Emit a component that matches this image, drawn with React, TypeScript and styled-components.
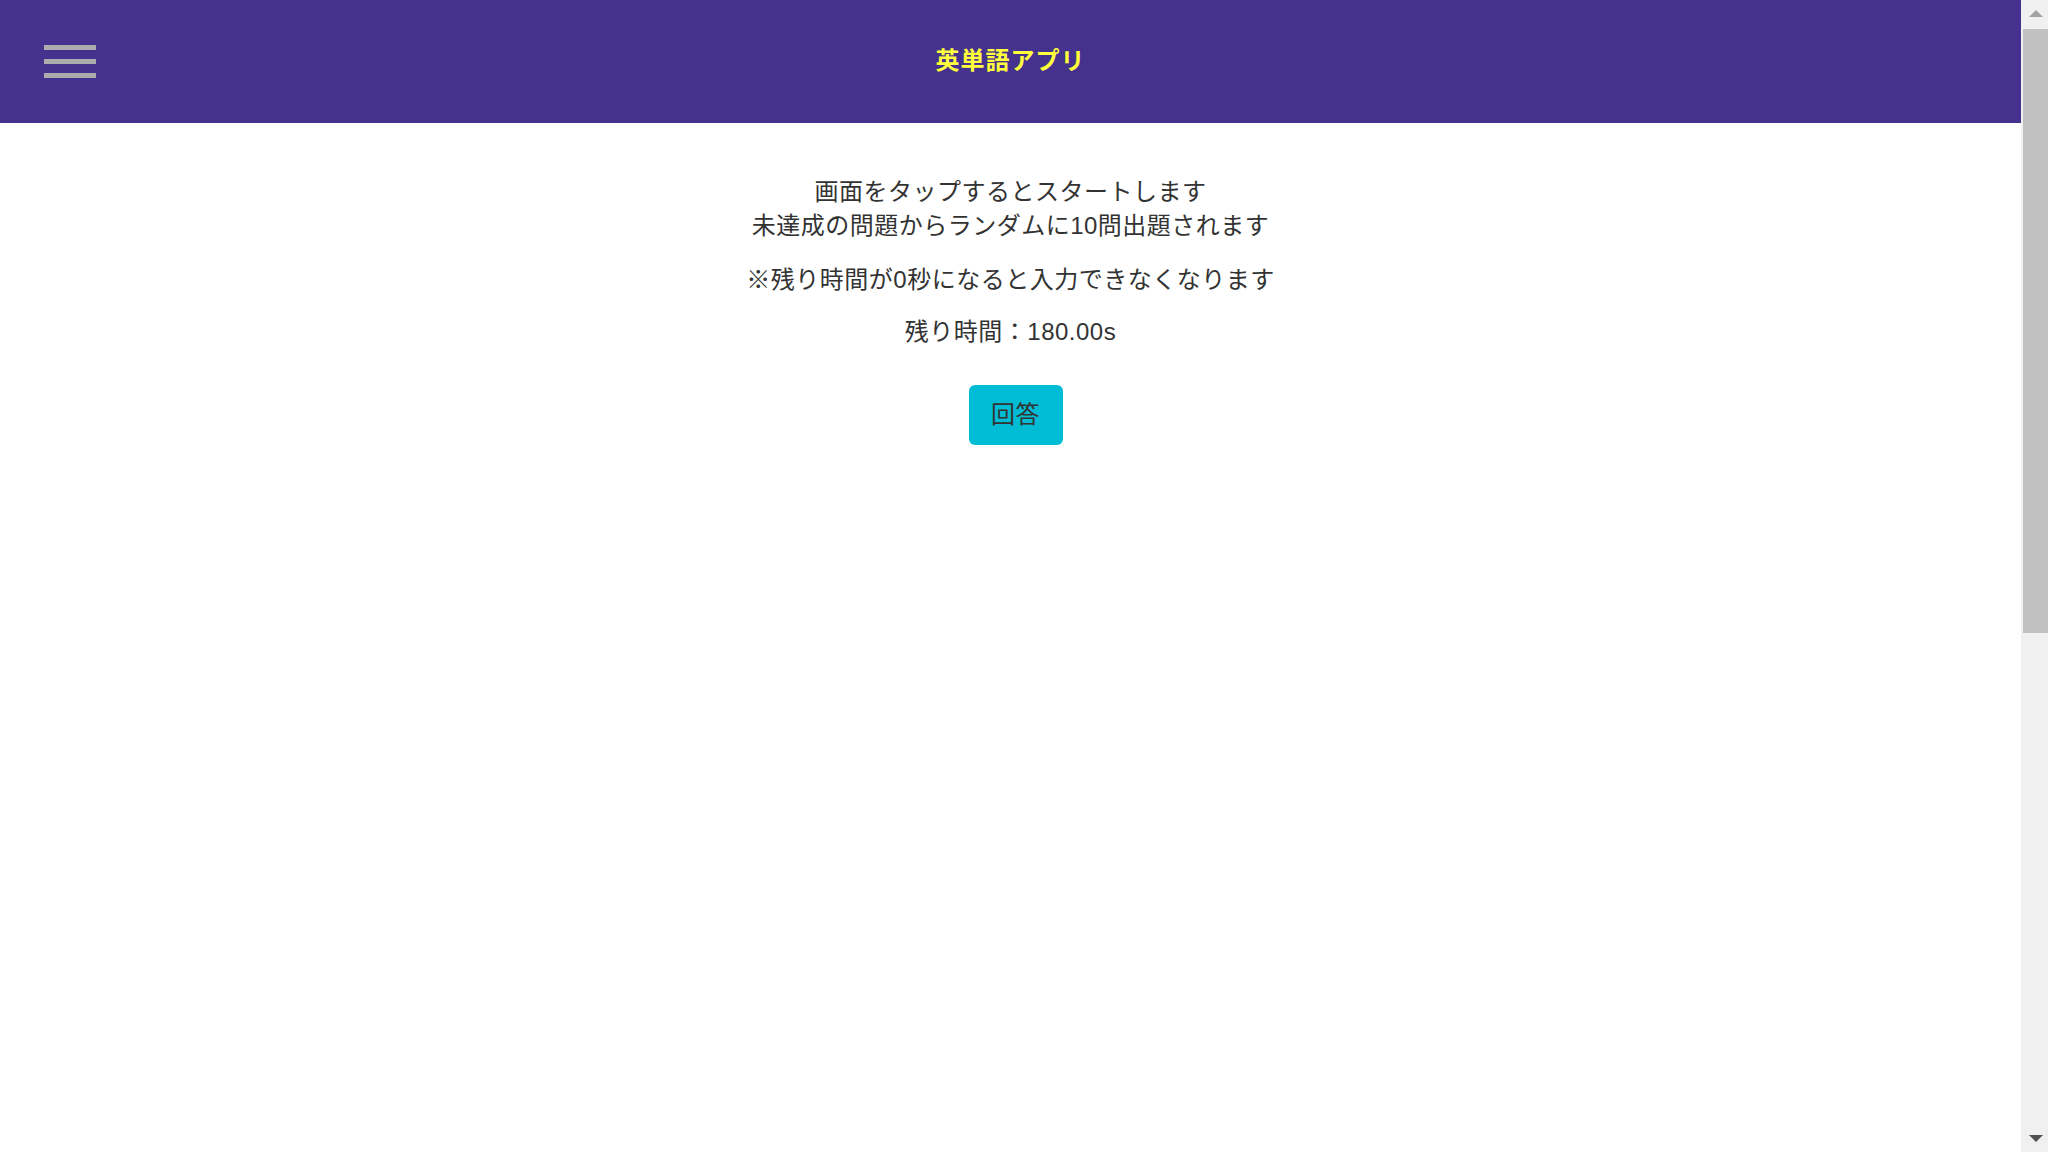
import React from "react";
import styled, { createGlobalStyle } from "styled-components";

const GlobalStyle = createGlobalStyle`
  html, body {
    margin: 0;
    padding: 0;
    height: 100%;
    overflow: hidden;
    background: #ffffff;
  }
  body {
    font-family: "Liberation Sans", "Noto Sans CJK JP", sans-serif;
    color: #333333;
  }
  #root {
    height: 100%;
  }
`;

const Shell = styled.div`
  display: flex;
  flex-direction: row;
  height: 100vh;
  width: 100vw;
`;

const Page = styled.div`
  flex: 1;
  display: flex;
  flex-direction: column;
  min-width: 0;
  background: #ffffff;
`;

const Header = styled.header`
  height: 123px;
  background: #45318e;
  display: grid;
  grid-template-columns: 1fr auto 1fr;
  align-items: center;
  flex-shrink: 0;
`;

const MenuButton = styled.button`
  justify-self: start;
  margin-left: 44px;
  margin-top: -1px;
  width: 52px;
  height: 33px;
  padding: 0;
  border: none;
  background: transparent;
  display: flex;
  flex-direction: column;
  justify-content: space-between;
  cursor: pointer;
`;

const MenuBar = styled.span`
  display: block;
  width: 52px;
  height: 5px;
  background: #acacac;
`;

const Title = styled.h1`
  margin: -5px 0 0;
  font-family: "Noto Sans CJK JP", sans-serif;
  font-size: 24px;
  font-weight: 700;
  color: #ffff3c;
  line-height: 1;
  letter-spacing: 1px;
`;

const Main = styled.main`
  display: flex;
  flex-direction: column;
  align-items: center;
  padding-top: 52px;
`;

const Message = styled.p<{ $gap: number }>`
  margin: ${(p) => p.$gap}px 0 0;
  font-size: 24px;
  line-height: 34px;
  text-align: center;
  color: #333333;
  letter-spacing: 0.5px;
`;

const AnswerButton = styled.button`
  margin-top: 36px;
  margin-left: 10px;
  width: 94px;
  height: 60px;
  border: none;
  border-radius: 6px;
  background: #00bcd4;
  color: #333333;
  font-family: "Noto Sans CJK JP", sans-serif;
  font-size: 24px;
  line-height: 1;
  letter-spacing: 0.5px;
  padding: 0 0 5px;
  cursor: pointer;
`;

const ScrollRail = styled.div`
  width: 27px;
  flex-shrink: 0;
  background: #f0f0f0;
  display: flex;
  flex-direction: column;
`;

const ScrollArrow = styled.div`
  height: 27px;
  display: flex;
  align-items: center;
  justify-content: center;
  padding-left: 2px;
`;

const ScrollTrack = styled.div`
  flex: 1;
  padding: 2px 0 0 2px;
`;

const ScrollThumb = styled.div`
  height: 604px;
  background: #c1c1c1;
`;

export default function App() {
  return (
    <>
      <GlobalStyle />
      <Shell>
        <Page>
          <Header>
            <MenuButton aria-label="menu">
              <MenuBar />
              <MenuBar />
              <MenuBar />
            </MenuButton>
            <Title>英単語アプリ</Title>
            <div />
          </Header>
          <Main>
            <Message $gap={0}>
              画面をタップするとスタートします
              <br />
              未達成の問題からランダムに10問出題されます
            </Message>
            <Message $gap={20}>※残り時間が0秒になると入力できなくなります</Message>
            <Message $gap={18}>残り時間：180.00s</Message>
            <AnswerButton>回答</AnswerButton>
          </Main>
        </Page>
        <ScrollRail>
          <ScrollArrow>
            <svg width="14" height="7" viewBox="0 0 14 7">
              <polygon points="0,7 7,0 14,7" fill="#a3a3a3" />
            </svg>
          </ScrollArrow>
          <ScrollTrack>
            <ScrollThumb />
          </ScrollTrack>
          <ScrollArrow>
            <svg width="14" height="7" viewBox="0 0 14 7">
              <polygon points="0,0 14,0 7,7" fill="#505050" />
            </svg>
          </ScrollArrow>
        </ScrollRail>
      </Shell>
    </>
  );
}
